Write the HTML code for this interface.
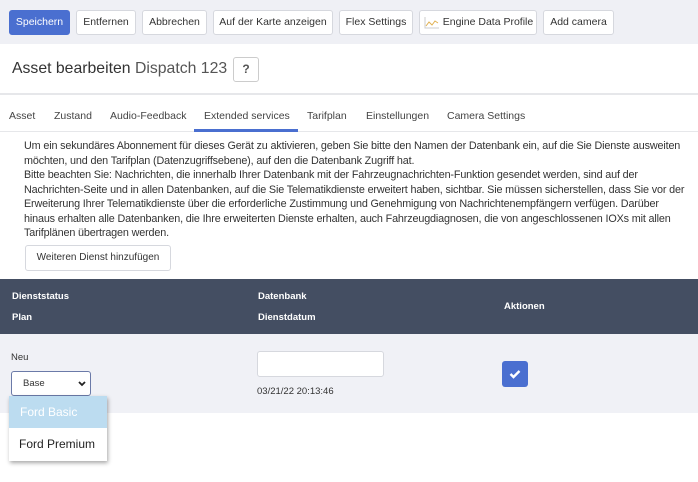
<!DOCTYPE html>
<html><head><meta charset="utf-8"><style>
*{box-sizing:border-box;margin:0;padding:0}
body{width:698px;height:482px;overflow:hidden;background:#fff;font-family:"Liberation Sans",sans-serif;color:#333;position:relative}
.a{position:absolute}
.tb{left:0;top:0;width:698px;height:44px;background:#eff0f5}
.btn{position:absolute;top:10px;height:25px;border:1px solid #d6d8de;border-radius:3px;background:#fff;font-size:10.5px;line-height:23px;text-align:center;color:#333;white-space:nowrap}
.p{font-size:10.8px;line-height:14.5px;color:#333;white-space:nowrap;letter-spacing:-0.15px}
.h{font-size:9.5px;font-weight:bold;color:#fff}
.tab{font-size:10.5px;color:#444;top:110px}
</style></head><body>
<div class="a tb"></div>
<div class="btn" style="left:9px;width:61px;background:#4a6fd0;border-color:#4a6fd0;color:#fff">Speichern</div>
<div class="btn" style="left:76px;width:60px">Entfernen</div>
<div class="btn" style="left:142px;width:65px">Abbrechen</div>
<div class="btn" style="left:213px;width:120px">Auf der Karte anzeigen</div>
<div class="btn" style="left:339px;width:74px">Flex Settings</div>
<div class="btn" style="left:419px;width:118px;padding-left:20px"><svg class="a" style="left:4px;top:6px" width="16" height="12"><path d="M1 0V11H15" stroke="#ccc" fill="none"/><path d="M2 9L5 5L8 8L11 4L14 6" stroke="#e0b050" fill="none"/></svg>Engine Data Profile</div>
<div class="btn" style="left:543px;width:71px">Add camera</div>
<div class="a" style="left:12px;top:60px;font-size:15.8px;color:#333;white-space:nowrap">Asset bearbeiten <span style="color:#555">Dispatch 123</span></div>
<div class="a" style="left:233px;top:57px;width:26px;height:25px;border:1px solid #ccc;border-radius:3px;text-align:center;font-weight:bold;font-size:12px;line-height:23px;color:#555">?</div>
<div class="a" style="left:0;top:93px;width:698px;height:2px;background:#e6e7ea"></div>
<div class="a tab" style="left:9px">Asset</div>
<div class="a tab" style="left:54px">Zustand</div>
<div class="a tab" style="left:110px">Audio-Feedback</div>
<div class="a tab" style="left:204px">Extended services</div>
<div class="a tab" style="left:307px">Tarifplan</div>
<div class="a tab" style="left:366px">Einstellungen</div>
<div class="a tab" style="left:447px">Camera Settings</div>
<div class="a" style="left:0;top:131px;width:698px;height:1px;background:#e6e7ea"></div>
<div class="a" style="left:194px;top:129px;width:104px;height:3px;background:#4a6fd0"></div>
<div class="a p" style="left:24px;top:139px">Um ein sekundäres Abonnement für dieses Gerät zu aktivieren, geben Sie bitte den Namen der Datenbank ein, auf die Sie Dienste ausweiten<br>möchten, und den Tarifplan (Datenzugriffsebene), auf den die Datenbank Zugriff hat.<br>Bitte beachten Sie: Nachrichten, die innerhalb Ihrer Datenbank mit der Fahrzeugnachrichten-Funktion gesendet werden, sind auf der<br>Nachrichten-Seite und in allen Datenbanken, auf die Sie Telematikdienste erweitert haben, sichtbar. Sie müssen sicherstellen, dass Sie vor der<br>Erweiterung Ihrer Telematikdienste über die erforderliche Zustimmung und Genehmigung von Nachrichtenempfängern verfügen. Darüber<br>hinaus erhalten alle Datenbanken, die Ihre erweiterten Dienste erhalten, auch Fahrzeugdiagnosen, die von angeschlossenen IOXs mit allen<br>Tarifplänen übertragen werden.</div>
<div class="btn" style="left:25px;top:245px;width:146px;height:26px;font-size:10px;line-height:24px">Weiteren Dienst hinzufügen</div>
<div class="a" style="left:0;top:279px;width:698px;height:55px;background:#444e62"></div>
<div class="a h" style="left:12px;top:291px">Dienststatus</div>
<div class="a h" style="left:12px;top:312px">Plan</div>
<div class="a h" style="left:258px;top:291px">Datenbank</div>
<div class="a h" style="left:258px;top:312px">Dienstdatum</div>
<div class="a h" style="left:504px;top:301px">Aktionen</div>
<div class="a" style="left:0;top:334px;width:698px;height:79px;background:#f0f1f6"></div>
<div class="a" style="left:11px;top:352px;font-size:9.5px">Neu</div>
<div class="a" style="left:11px;top:371px;width:80px;height:25px;border:1px solid #6b7aa8;border-radius:3px;background:#fff;font-size:9.5px;line-height:23px;padding-left:11px">Base<svg class="a" style="left:66px;top:9px" width="8" height="6"><path d="M1 1L4 4L7 1" stroke="#222" stroke-width="1.8" fill="none"/></svg></div>
<div class="a" style="left:257px;top:351px;width:127px;height:26px;border:1px solid #d6d8de;border-radius:3px;background:#fff"></div>
<div class="a" style="left:257px;top:386px;font-size:9.5px">03/21/22 20:13:46</div>
<div class="a" style="left:502px;top:361px;width:26px;height:26px;border-radius:3px;background:#4a6fd0"><svg class="a" style="left:7px;top:8px" width="12" height="10"><path d="M1.5 5L4.5 8L10.5 2" stroke="#fff" stroke-width="2.4" fill="none"/></svg></div>
<div class="a" style="left:9px;top:396px;width:98px;height:65px;background:#fff;box-shadow:1px 2px 4px rgba(0,0,0,.35)">
<div style="height:32px;background:#bcdcf0;color:#fff;font-size:12px;line-height:32px;padding-left:11px">Ford Basic</div>
<div style="height:33px;color:#222;font-size:12px;line-height:33px;padding-left:10px">Ford Premium</div>
</div>
</body></html>
